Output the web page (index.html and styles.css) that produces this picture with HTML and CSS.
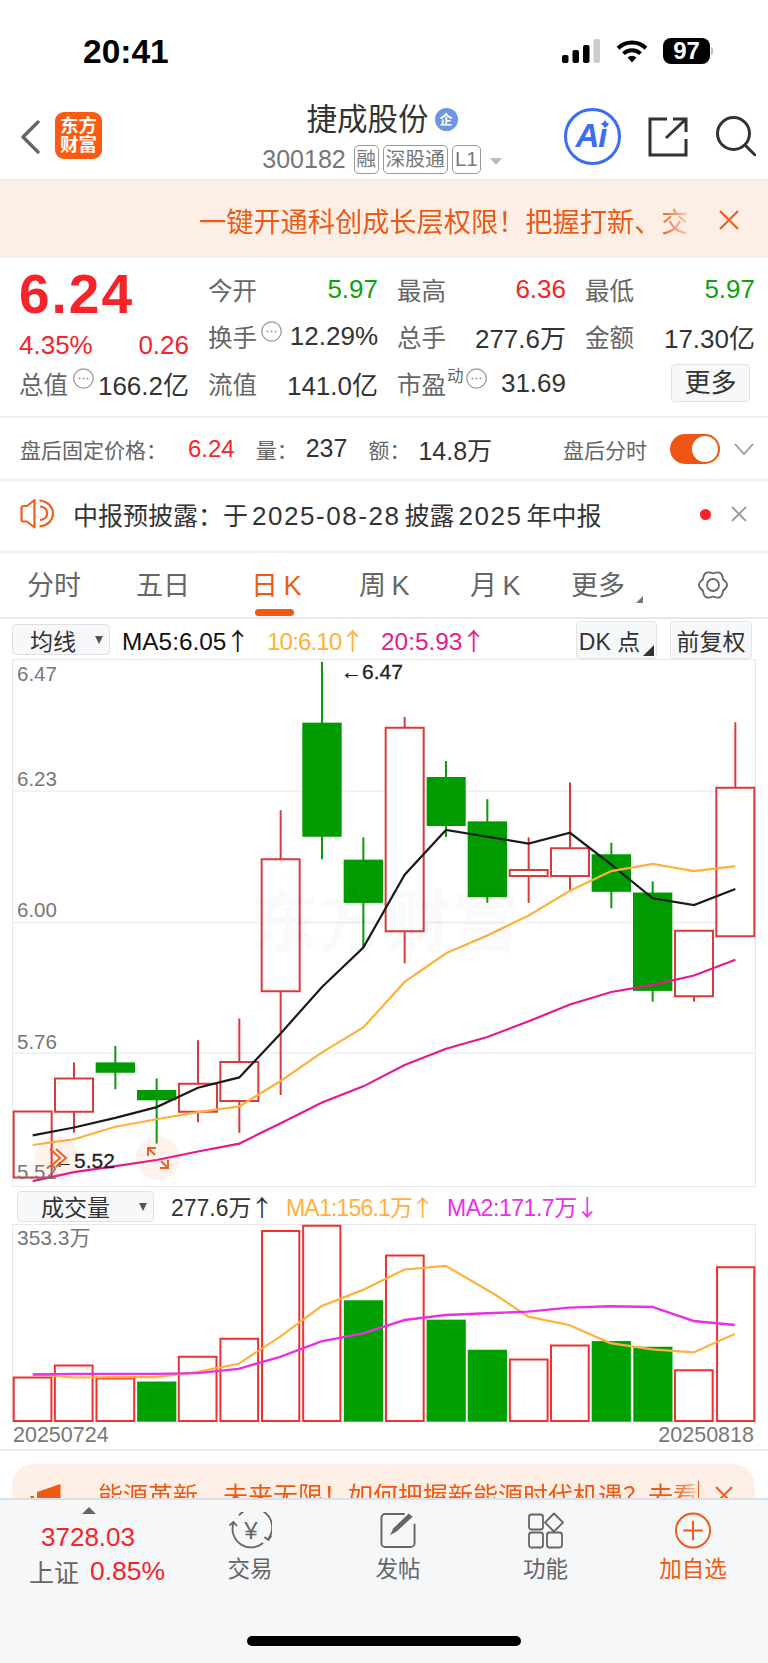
FILE: index.html
```html
<!DOCTYPE html>
<html lang="zh-CN">
<head>
<meta charset="utf-8">
<title>捷成股份 300182</title>
<link rel="stylesheet" href="styles.css">
</head>
<body>
<div class="page">
  <header class="status">
    <span class="clock">20:41</span>
    <div class="status-icons">
      <svg class="signal" viewBox="0 0 38 24" width="38" height="24">
        <rect x="0" y="16" width="6.5" height="8" rx="2" fill="#000"/>
        <rect x="10.5" y="11" width="6.5" height="13" rx="2" fill="#000"/>
        <rect x="21" y="6" width="6.5" height="18" rx="2" fill="#000"/>
        <rect x="31.5" y="0" width="6.5" height="24" rx="2" fill="#ccc"/>
      </svg>
      <svg class="wifi" viewBox="0 0 32 24" width="32" height="24">
        <path d="M2 9.2a20 20 0 0 1 28 0" fill="none" stroke="#000" stroke-width="4"/>
        <path d="M7.5 14.6a12.4 12.4 0 0 1 17 0" fill="none" stroke="#000" stroke-width="4"/>
        <path d="M11.6 18.4a6.4 6.4 0 0 1 8.8 0L16 23.6z" fill="#000"/>
      </svg>
      <div class="battery"><span>97</span></div>
    </div>
  </header>

  <nav class="nav">
    <div class="nav-left">
      <svg class="back" viewBox="0 0 20 34" width="20" height="34"><path d="M18 2 3 17l15 15" fill="none" stroke="#666" stroke-width="3.4" stroke-linecap="round" stroke-linejoin="round"/></svg>
      <div class="logo"><span>东方</span><span>财富</span></div>
    </div>
    <div class="nav-title">
      <div class="name-row"><span class="name">捷成股份</span><span class="corp">企</span></div>
      <div class="code-row">
        <span class="code">300182</span>
        <span class="tag">融</span><span class="tag">深股通</span><span class="tag">L1</span>
        <i class="code-caret"></i>
      </div>
    </div>
    <div class="nav-right">
      <div class="ai">
        <span>Ai</span>
        <svg class="spark" viewBox="0 0 10 10" width="10" height="10"><path d="M5 0c.6 3 1.6 4.2 5 5-3.4.8-4.4 2-5 5-.6-3-1.6-4.2-5-5 3.4-.8 4.4-2 5-5z" fill="#3a6cf4"/></svg>
      </div>
      <svg class="share" viewBox="0 0 40 40" width="40" height="40"><path d="M19 2H2v36h36V22M18 21 38 2M25 2h13v13" fill="none" stroke="#333" stroke-width="3"/></svg>
      <svg class="search" viewBox="0 0 40 40" width="40" height="40"><circle cx="17.500" cy="17.500" r="16" fill="none" stroke="#333" stroke-width="3"/><path d="m29 29 10 10" stroke="#333" stroke-width="3" stroke-linecap="round"/></svg>
    </div>
  </nav>

  <section class="banner">
    <div class="banner-text">一键开通科创成长层权限！把握打新、交</div>
    <svg class="close" viewBox="0 0 20 20" width="20" height="20"><path d="m1 1 18 18M19 1 1 19" stroke="#f0601f" stroke-width="2.200"/></svg>
  </section>

  <section class="stats">
    <div class="quote">
      <div class="price">6.24</div>
      <div class="change"><span>4.35%</span><span>0.26</span></div>
      <div class="cell"><span class="lab">总值<svg class="hint" viewBox="0 0 21 21" width="21" height="21"><use href="#dots"/></svg></span><span class="val">166.2亿</span></div>
    </div>
    <div class="fields">
      <div class="cell"><span class="lab">今开</span><span class="val up-no">5.97</span></div>
      <div class="cell"><span class="lab">最高</span><span class="val red">6.36</span></div>
      <div class="cell"><span class="lab">最低</span><span class="val up-no">5.97</span></div>
      <div class="cell"><span class="lab">换手<svg class="hint" viewBox="0 0 21 21" width="21" height="21"><use href="#dots"/></svg></span><span class="val">12.29%</span></div>
      <div class="cell"><span class="lab">总手</span><span class="val">277.6万</span></div>
      <div class="cell"><span class="lab">金额</span><span class="val">17.30亿</span></div>
      <div class="cell"><span class="lab">流值</span><span class="val">141.0亿</span></div>
      <div class="cell"><span class="lab">市盈<sup class="dyn">动</sup><svg class="hint" viewBox="0 0 21 21" width="21" height="21"><use href="#dots"/></svg></span><span class="val">31.69</span></div>
      <div class="cell cell-end"><button class="more">更多</button></div>
    </div>
    <svg class="defs" width="0" height="0"><defs><g id="dots"><circle cx="10.500" cy="10.500" r="9.700" fill="none" stroke="#999" stroke-width="1.300"/><circle cx="6.500" cy="10.500" r="1" fill="#999"/><circle cx="10.500" cy="10.500" r="1" fill="#999"/><circle cx="14.500" cy="10.500" r="1" fill="#999"/></g></defs></svg>
  </section>

  <section class="after">
    <span class="after-lab">盘后固定价格：</span><span class="after-price">6.24</span>
    <span class="after-lab gap-a">量：</span><span class="after-val gap-b">237</span>
    <span class="after-lab gap-c">额：</span><span class="after-val gap-b">14.8万</span>
    <span class="after-lab after-right">盘后分时</span>
    <span class="toggle"><i></i></span>
    <svg class="after-chev" viewBox="0 0 20 12" width="20" height="12"><path d="m1 1 9 10 9-10" fill="none" stroke="#999" stroke-width="1.800"/></svg>
  </section>

  <section class="notice">
    <svg class="speaker" viewBox="0 0 34 30" width="34" height="30">
      <path d="M3.500 7H7l7.500-6v27.500L7 22.500H3.500a2 2 0 0 1-2-2V9a2 2 0 0 1 2-2z" fill="none" stroke="#f0601f" stroke-width="2.200" stroke-linejoin="round"/>
      <path d="M20 7.500a7 6.500 0 0 1 0 13.500M19.500 1.500c9 1 13.500 7 13.500 13s-4.500 12-13.500 13" fill="none" stroke="#f0601f" stroke-width="2.200"/>
    </svg>
    <span class="notice-text">中报预披露：于<span class="num">2025-08-28</span>披露<span class="num">2025</span>年中报</span>
    <i class="dot"></i>
    <svg class="notice-x" viewBox="0 0 16 16" width="16" height="16"><path d="m1 1 14 14M15 1 1 15" stroke="#999" stroke-width="1.800"/></svg>
  </section>

  <section class="tabs">
    <span class="tab t1">分时</span>
    <span class="tab t2">五日</span>
    <span class="tab t3 active">日 K</span>
    <span class="tab t4">周 K</span>
    <span class="tab t5">月 K</span>
    <span class="tab t6">更多<i class="corner"></i></span>
    <svg class="gear" viewBox="0 0 32 32" width="32" height="32">
      <path d="M16 4.500Q25 .4 26 10.250Q34 16 26 21.750Q25 31.600 16 27.500Q7 31.600 6 21.750Q-2 16 6 10.250Q7 .4 16 4.500z" fill="none" stroke="#666" stroke-width="1.800"/>
      <circle cx="16" cy="16" r="6" fill="none" stroke="#666" stroke-width="1.800"/>
    </svg>
  </section>

  <section class="chart-head">
    <div class="select sel-ma"><span>均线</span><i class="drop"></i></div>
    <span class="ma ma5">MA5:6.05<span class="arr">↑</span></span>
    <span class="ma ma10">10:6.10<span class="arr">↑</span></span>
    <span class="ma ma20">20:5.93<span class="arr">↑</span></span>
    <div class="opt opt-dk">DK 点<i class="corner dark"></i></div>
    <div class="opt opt-fq">前复权</div>
  </section>

  <section class="kline">
    <svg class="plot" viewBox="36 55 2232 1475" preserveAspectRatio="none">
      <g class="grid">
        <line x1="36" x2="2268" y1="425" y2="425"/>
        <line x1="36" x2="2268" y1="792" y2="792"/>
        <line x1="36" x2="2268" y1="1157" y2="1157"/>
      </g>
      <g class="wick-red">
        <line x1="222" x2="222" y1="1183" y2="1380"/>
        <line x1="594" x2="594" y1="1121" y2="1350"/>
        <line x1="718" x2="718" y1="1060" y2="1380"/>
        <line x1="842" x2="842" y1="478" y2="1274"/>
        <line x1="1214" x2="1214" y1="217" y2="906"/>
        <line x1="1586" x2="1586" y1="554" y2="737"/>
        <line x1="1710" x2="1710" y1="400" y2="706"/>
        <line x1="2082" x2="2082" y1="998" y2="1013"/>
        <line x1="2206" x2="2206" y1="232" y2="415"/>
      </g>
      <g class="wick-green">
        <line x1="346" x2="346" y1="1137" y2="1258"/>
        <line x1="470" x2="470" y1="1228" y2="1410"/>
        <line x1="966" x2="966" y1="63" y2="615"/>
        <line x1="1090" x2="1090" y1="554" y2="862"/>
        <line x1="1338" x2="1338" y1="340" y2="553"/>
        <line x1="1462" x2="1462" y1="447" y2="737"/>
        <line x1="1834" x2="1834" y1="569" y2="752"/>
        <line x1="1958" x2="1958" y1="677" y2="1013"/>
      </g>
      <g class="body-red">
        <rect x="41" y="1320" width="114" height="185"/>
        <rect x="165" y="1228" width="114" height="93"/>
        <rect x="537" y="1243" width="114" height="78"/>
        <rect x="661" y="1182" width="114" height="109"/>
        <rect x="785" y="615" width="114" height="369"/>
        <rect x="1157" y="247" width="114" height="569"/>
        <rect x="1529" y="645" width="114" height="17"/>
        <rect x="1653" y="584" width="114" height="78"/>
        <rect x="2025" y="815" width="114" height="183"/>
        <rect x="2149" y="415" width="114" height="415"/>
      </g>
      <g class="body-green">
        <rect x="287" y="1183" width="118" height="29"/>
        <rect x="411" y="1260" width="118" height="29"/>
        <rect x="907" y="233" width="118" height="319"/>
        <rect x="1031" y="616" width="118" height="121"/>
        <rect x="1280" y="385" width="117" height="137"/>
        <rect x="1403" y="509" width="118" height="212"/>
        <rect x="1775" y="601" width="118" height="105"/>
        <rect x="1899" y="708" width="118" height="275"/>
      </g>
      <polyline class="line-black" points="98,1387 222,1365 346,1338 470,1308 594,1254 718,1225 842,1102 966,972 1090,862 1214,658 1338,533 1462,552 1586,571 1710,541 1834,630 1958,724 2082,743 2206,698"/>
      <polyline class="line-yellow" points="98,1414 222,1398 346,1363 470,1342 594,1322 718,1306 842,1235 966,1155 1090,1085 1214,958 1338,878 1462,828 1586,772 1710,703 1834,648 1958,628 2082,648 2206,634"/>
      <polyline class="line-pink" points="98,1515 222,1490 346,1473 470,1456 594,1432 718,1410 842,1353 966,1295 1090,1250 1214,1190 1338,1145 1462,1112 1586,1068 1710,1021 1834,986 1958,966 2082,940 2206,896"/>
    </svg>
    <span class="watermark">东方财富</span>
    <span class="axis a1">6.47</span>
    <span class="axis a2">6.23</span>
    <span class="axis a3">6.00</span>
    <span class="axis a4">5.76</span>
    <span class="axis a5">5.52</span>
    <span class="peak p-high">←6.47</span>
    <span class="peak p-low">←5.52</span>
    <div class="mark m1">
      <svg viewBox="0 0 44 44" width="44" height="44"><path d="m15 13 10 9-10 9M21 13l10 9-10 9" fill="none" stroke="#f0601f" stroke-width="2"/></svg>
    </div>
    <div class="mark m2">
      <svg viewBox="0 0 44 44" width="44" height="44"><path d="M12 20v-8h8M12 12l7 7M32 24v8h-8M32 32l-7-7" fill="none" stroke="#f0601f" stroke-width="2"/></svg>
    </div>
  </section>

  <section class="vol-head">
    <div class="select sel-vol"><span>成交量</span><i class="drop"></i></div>
    <span class="ma vol-now">277.6万<span class="arr">↑</span></span>
    <span class="ma vol-m1">MA1:156.1万<span class="arr">↑</span></span>
    <span class="ma vol-m2">MA2:171.7万<span class="arr">↓</span></span>
  </section>

  <section class="vol">
    <svg class="plot" viewBox="24.500 103 1519 592" preserveAspectRatio="none">
      <g class="bar-red">
        <rect x="28" y="562" width="77" height="130"/>
        <rect x="112" y="526" width="77" height="166"/>
        <rect x="197" y="565" width="77" height="127"/>
        <rect x="365" y="500" width="77" height="192"/>
        <rect x="450" y="446" width="77" height="246"/>
        <rect x="535" y="124" width="76" height="568"/>
        <rect x="619" y="108" width="76" height="584"/>
        <rect x="788" y="197" width="77" height="495"/>
        <rect x="1041" y="508" width="77" height="184"/>
        <rect x="1125" y="466" width="77" height="226"/>
        <rect x="1378" y="540" width="77" height="152"/>
        <rect x="1464" y="232" width="76" height="460"/>
      </g>
      <g class="bar-green">
        <rect x="280" y="574" width="80" height="120"/>
        <rect x="702" y="331" width="80" height="363"/>
        <rect x="871" y="389" width="80" height="305"/>
        <rect x="955" y="479" width="80" height="215"/>
        <rect x="1208" y="453" width="80" height="241"/>
        <rect x="1293" y="470" width="80" height="224"/>
      </g>
      <polyline class="line-yellow" points="67,552 150,562 235,561 318,561 403,545 487,521 572,440 656,349 741,300 826,239 910,228 1013,316 1078,380 1162,405 1246,459 1332,478 1416,487 1500,432"/>
      <polyline class="line-violet" points="67,553 150,551 235,551 318,551 403,549 487,536 572,500 656,454 741,430 826,390 910,375 995,370 1078,365 1162,353 1246,349 1332,351 1416,393 1500,405"/>
    </svg>
    <span class="axis a-vol">353.3万</span>
  </section>

  <section class="dates"><span>20250724</span><span>20250818</span></section>

  <div class="scroll-rest">
    <div class="ad">
      <svg class="ad-icon" viewBox="0 0 32 30" width="32" height="30"><path d="M1.500 12H5v18H1.500zM8 8 31.500 0v30H8z" fill="#ee5a14"/></svg>
      <div class="ad-text">能源革新，未来无限！如何把握新能源时代机遇？去看</div>
      <i class="ad-bar"></i>
      <svg class="ad-x" viewBox="0 0 18 18" width="18" height="18"><path d="m1 1 16 16M17 1 1 17" stroke="#f0601f" stroke-width="2"/></svg>
    </div>
  </div>

  <footer class="bottom">
    <div class="index">
      <i class="idx-up"></i>
      <div class="idx-num">3728.03</div>
      <div class="idx-row"><span class="idx-name">上证</span><span class="idx-pct">0.85%</span></div>
    </div>
    <div class="action">
      <svg viewBox="0 0 44 37" width="44" height="37">
        <path d="M5.500 11A18.500 18.500 0 0 0 35 31M11 3.500A18.500 18.500 0 0 1 40 27" fill="none" stroke="#666" stroke-width="1.800"/>
        <path d="M1.500 13.500 5.500 10l3.500 4M36.500 25l4 3 3-4.500" fill="none" stroke="#666" stroke-width="1.800"/>
        <text x="23" y="27" text-anchor="middle" class="yen">¥</text>
      </svg>
      <span>交易</span>
    </div>
    <div class="action">
      <svg viewBox="0 0 38 38" width="38" height="38">
        <path d="M26 2H6a4 4 0 0 0-4 4v26a4 4 0 0 0 4 4h26a4 4 0 0 0 4-4V12" fill="none" stroke="#666" stroke-width="2"/>
        <path d="m11 24 3-7L30 1.500l4 3.500-16.500 15z" fill="#666"/>
      </svg>
      <span>发帖</span>
    </div>
    <div class="action">
      <svg viewBox="0 0 36 36" width="36" height="36">
        <rect x="1" y="2" width="14" height="15" rx="2.500" fill="none" stroke="#666" stroke-width="1.800"/>
        <path d="m26 1 9 9-9 9-9-9z" fill="none" stroke="#666" stroke-width="1.800" stroke-linejoin="round"/>
        <rect x="1" y="20" width="14" height="15" rx="2.500" fill="none" stroke="#666" stroke-width="1.800"/>
        <rect x="19" y="20" width="15" height="15" rx="2.500" fill="none" stroke="#666" stroke-width="1.800"/>
      </svg>
      <span>功能</span>
    </div>
    <div class="action add">
      <svg viewBox="0 0 38 38" width="38" height="38">
        <circle cx="19" cy="19" r="17.500" fill="none" stroke="#ee5a14" stroke-width="2"/>
        <path d="M19 9v20M9 19h20" stroke="#ee5a14" stroke-width="2"/>
      </svg>
      <span>加自选</span>
    </div>
    <i class="home"></i>
  </footer>
</div>
</body>
</html>
```

FILE: styles.css
```css
* { box-sizing: border-box; }
html, body { margin: 0; padding: 0; background: #fff; }
i { display: block; font-style: normal; }

.page {
  width: 768px;
  height: 1663px;
  display: flex;
  flex-direction: column;
  overflow: hidden;
  color: #333;
  font-family: "Liberation Sans", "Noto Sans CJK SC", sans-serif;
}

/* status bar */
.status { flex: 0 0 90px; display: flex; justify-content: space-between; padding: 34px 58px 0 83px; }
.clock { font-size: 33.5px; font-weight: 700; line-height: 36px; color: #000; }
.status-icons { display: flex; align-items: flex-start; padding-top: 5px; }
.signal { margin-right: 16px; }
.wifi { margin-right: 15px; }
.battery {
  position: relative; width: 47px; height: 26px; margin-top: -1px;
  background: #000; border-radius: 8px; color: #fff;
  font-size: 24px; font-weight: 700; line-height: 26px; text-align: center;
}
.battery::after {
  content: ""; position: absolute; right: -3px; top: 9px; width: 2px; height: 8px;
  background: #bbb; border-radius: 0 2px 2px 0;
}

/* navigation */
.nav { flex: 0 0 89px; display: grid; grid-template-columns: 200px 364px 204px; }
.nav-left { display: flex; align-items: flex-start; padding: 29px 0 0 20px; }
.back { margin-top: 1px; }
.logo {
  width: 47px; height: 47px; margin: -7px 0 0 15px; padding-top: 5px;
  background: #fb5a10; border-radius: 9px; color: #fff;
  display: flex; flex-direction: column; align-items: center;
  font-size: 18.500px; font-weight: 700; line-height: 18.500px;
}
.nav-title { display: flex; flex-direction: column; align-items: center; padding-top: 11px; }
.name-row { display: flex; align-items: center; height: 36px; }
.name { font-size: 30.500px; color: #333; line-height: 36px; }
.corp {
  width: 23px; height: 23px; margin-left: 6px; border-radius: 50%;
  background: #6f94e6; color: #fff; font-size: 13px; font-weight: 700;
  line-height: 23px; text-align: center;
}
.code-row { display: flex; align-items: center; margin-top: 8px; height: 29px; }
.code { font-size: 25px; color: #777; margin-right: 8px; }
.tag {
  height: 29px; padding: 0 2px; margin-right: 4px;
  border: 1px solid #999; border-radius: 5px;
  font-size: 19.800px; line-height: 26px; color: #777;
}
.tag:nth-of-type(2) { padding: 0 1.500px; }
.tag:last-of-type { padding: 0 2px; font-size: 20.500px; }
.code-caret {
  width: 0; height: 0; margin-left: 5px; margin-top: 4px;
  border-left: 6.500px solid transparent; border-right: 6.500px solid transparent;
  border-top: 7px solid #bbb;
}
.nav-right { display: flex; align-items: flex-start; padding-top: 18px; }
.ai {
  position: relative; width: 57px; height: 57px;
  border: 3.500px solid #3a6cf4; border-radius: 50%;
  color: #3a6cf4; font-size: 33px; font-weight: 700; font-style: italic;
  line-height: 49px; text-align: center;
}
.ai span { display: block; margin-left: -3px; letter-spacing: -1px; }
.spark { position: absolute; left: 33px; top: 8px; }
.share { margin: 9px 0 0 27px; }
.search { margin: 8px 0 0 28px; }

/* promo strip */
.banner {
  flex: 0 0 79px; position: relative; display: flex; align-items: center;
  padding-left: 199px; background: #fdeee6; border-top: 2px solid #eeeeee;
}
.banner-text {
  width: 490px; white-space: nowrap;
  font-size: 27.200px; color: #ee5a14;
  -webkit-mask-image: linear-gradient(to right, #000 94%, rgba(0, 0, 0, .2) 100%);
  mask-image: linear-gradient(to right, #000 94%, rgba(0, 0, 0, .2) 100%);
}
.close { margin-left: 30px; }

/* quote panel */
.stats {
  flex: 0 0 160px; display: flex; padding: 8px 0 0 19px;
  border-bottom: 2px solid #eeeeee;
}
.stats .defs { position: absolute; }
.quote { width: 170px; margin-right: 19px; display: flex; flex-direction: column; }
.price { font-size: 55px; font-weight: 700; color: #f5242a; line-height: 54px; height: 54px; letter-spacing: 2px; padding-top: 1px; }
.change { display: flex; justify-content: space-between; height: 42px; align-items: center; margin-top: 4px; color: #f5242a; font-size: 26px; }
.quote .cell { margin-top: -6px; }
.fields { display: grid; grid-template-columns: 170px 169px 170px; grid-auto-rows: 47px; column-gap: 19px; }
.cell { display: flex; justify-content: space-between; align-items: center; height: 47px; white-space: nowrap; }
.cell-end { justify-content: flex-end; padding-right: 5px; }
.lab { display: flex; align-items: center; font-size: 24.500px; color: #666; }
.val { font-size: 26px; color: #333; }
.red { color: #f5242a; }
.up-no { color: #0aa30a; }
.hint { margin: -10px 0 0 4px; flex: none; }
.quote .hint { margin: -10px 0 0 5px; }
.dyn { font-size: 16.500px; line-height: 16px; margin: -16px 0 0 1px; vertical-align: baseline; }
.dyn + .hint { margin-left: 2px; }
.more {
  width: 79px; height: 38px; padding: 0; margin-top: -1px; background: #f7f8fa;
  border: 1px solid #dfe1e6; border-radius: 4px; font: inherit;
  font-size: 26px; line-height: 34px; color: #333;
}

/* after-hours row */
.after {
  flex: 0 0 63px; display: flex; align-items: center; padding-left: 20px;
  border-bottom: 2px solid #eeeeee; white-space: nowrap;
}
.after-lab { font-size: 21px; color: #666; }
.after-price { margin-left: 21px; font-size: 24px; color: #f5242a; }
.after-val { font-size: 25px; color: #333; }
.gap-a { margin-left: 21px; }
.gap-b { margin-left: 8px; }
.gap-c { margin-left: 21px; }
.after-right { margin-left: auto; }
.toggle { width: 50px; height: 30px; margin-left: 23px; padding: 2px 2px 2px 22px; background: #ee5514; border-radius: 15px; }
.toggle i { width: 26px; height: 26px; background: #fff; border-radius: 50%; }
.after-chev { margin: 0 14px 0 14px; }

/* announcement row */
.notice { flex: 0 0 70px; display: flex; align-items: center; padding: 0 0 4px 20px; white-space: nowrap; }
.notice-text { margin-left: 19px; font-size: 25px; color: #333; }
.num { margin: 0 4px; font-size: 26px; letter-spacing: 1.550px; }
.dot { width: 11px; height: 11px; margin-left: auto; background: #f5242a; border-radius: 50%; }
.notice-x { margin: 0 21px 0 20px; }

/* period tabs */
.tabs {
  flex: 0 0 68px; position: relative; display: flex; align-items: center;
  border-top: 2px solid #eeeeee; border-bottom: 2px solid #e6e7ec; white-space: nowrap;
}
.tab { position: absolute; top: 15px; font-size: 27px; line-height: 36px; color: #666; word-spacing: -2px; }
.t1 { left: 27px; }
.t2 { left: 136px; }
.t3 { left: 251px; color: #ee5a14; }
.t4 { left: 359px; }
.t5 { left: 470px; }
.t6 { left: 571px; }
.active::after {
  content: ""; position: absolute; left: 4px; top: 41px; width: 39px; height: 6.500px;
  background: #ee5a14; border-radius: 3.500px;
}
.corner {
  position: absolute; right: -18px; bottom: 1px; width: 0; height: 0;
  border-style: solid; border-width: 0 0 7px 7px;
  border-color: transparent transparent #777 transparent;
}
.gear { position: absolute; left: 697px; top: 16px; }

/* chart legends */
.chart-head { flex: 0 0 40px; position: relative; white-space: nowrap; }
.select {
  position: absolute; display: flex; align-items: center;
  background: #f7f8fa; border: 1px solid #dfe1e6; border-radius: 4px; color: #333;
}
.sel-ma { left: 12px; top: 5px; width: 98px; height: 31px; padding-left: 17px; font-size: 23px; }
.drop {
  position: absolute; right: 6px; top: 11px; width: 0; height: 0;
  border-left: 4.500px solid transparent; border-right: 4.500px solid transparent;
  border-top: 8px solid #555;
}
.ma { position: absolute; top: 3px; font-size: 24.400px; line-height: 36px; }
.arr { margin-left: 2px; font-family: "Noto Sans CJK SC", sans-serif; display: inline-block; width: 18px; text-align: center; text-indent: -3px; letter-spacing: 0; }
.ma5 { left: 122px; color: #111; }
.ma10 { left: 267px; color: #ffb13b; letter-spacing: -1px; }
.ma20 { left: 381px; color: #e6198f; }
.opt {
  position: absolute; top: 2px; height: 38px; display: flex; align-items: center; justify-content: center;
  background: #f7f8fa; border: 1px solid #e3e5ea; border-radius: 4px; font-size: 23px; color: #333;
}
.opt-dk { left: 576px; width: 81px; padding-right: 14px; }
.opt-fq { left: 670px; width: 82px; }
.corner.dark { right: 2px; bottom: 2px; border-width: 0 0 11px 11px; border-color: transparent transparent #333 transparent; }

/* candlestick pane */
.kline, .vol { position: relative; margin-left: 12px; width: 744px; border: 1px solid #e6e7ec; }
.kline { flex: 0 0 527.500px; }
.vol { flex: 0 0 198px; }
.plot { position: absolute; left: -1px; top: -1px; width: 744px; height: calc(100% + 2px); overflow: visible; }
.plot line, .plot rect, .plot polyline { vector-effect: non-scaling-stroke; }
.grid line { stroke: #edeff3; stroke-width: 1.500; }
.wick-red line { stroke: #d93a3a; stroke-width: 2; }
.wick-green line { stroke: #0a9a0a; stroke-width: 2; }
.body-red rect { fill: #fff; stroke: #d93a3a; stroke-width: 2; }
.body-green rect { fill: #009b00; }
.line-black, .line-yellow, .line-pink, .line-violet { fill: none; stroke-width: 2.200; }
.line-black { stroke: #1a1a1a; }
.line-yellow { stroke: #ffb13b; }
.line-pink { stroke: #e6198f; }
.line-violet { stroke: #e830e8; stroke-width: 2.400; }
.watermark {
  position: absolute; left: 238px; top: 229px; font-size: 67px; line-height: 67px; font-weight: 700;
  color: rgba(0, 0, 0, .018); white-space: nowrap;
}
.axis { position: absolute; left: 4px; font-size: 20.500px; line-height: 24px; color: #777; }
.a1 { top: 2px; }
.a2 { top: 107px; }
.a3 { top: 238px; }
.a4 { top: 370px; }
.a5 { top: 500px; }
.a-vol { top: 1px; font-size: 21px; }
.peak { position: absolute; font-size: 21px; line-height: 24px; color: #222; white-space: nowrap; -webkit-text-stroke: .3px #222; }
.p-high { left: 328px; top: 0; }
.p-low { left: 40px; top: 489px; }
.mark { position: absolute; top: 476px; width: 44px; height: 44px; border-radius: 50%; background: rgba(240, 90, 20, .08); }
.m1 { left: 22px; }
.m2 { left: 123px; }
.mark svg { display: block; }

/* volume pane */
.vol-head { flex: 0 0 37.500px; position: relative; white-space: nowrap; }
.sel-vol { left: 17px; top: 4px; width: 137px; height: 31px; padding-left: 23px; font-size: 23px; }
.vol-head .ma { top: 1px; font-size: 23px; }
.vol-now { left: 171px; color: #333; }
.vol-m1 { left: 286px; color: #ffb13b; letter-spacing: -.8px; }
.vol-m2 { left: 447px; color: #e830e8; letter-spacing: -.45px; }
.bar-red rect { fill: #fff; stroke: #f03030; stroke-width: 2; }
.bar-green rect { fill: #00a000; }

.dates {
  flex: 0 0 28.500px; display: flex; justify-content: space-between; align-items: center;
  padding: 0 14px 0 13px; border-bottom: 2px solid #e6e7ec;
  font-size: 21.500px; color: #777;
}

/* promo card sitting behind the toolbar */
.scroll-rest { flex: 1 1 0; min-height: 0; overflow: hidden; padding: 13px 13px 0 12px; }
.ad {
  position: relative; height: 70px; display: flex; align-items: flex-start;
  background: #fdeee6; border-radius: 22px;
}
.ad-icon { position: absolute; left: 17px; top: 20px; }
.ad-text {
  position: absolute; left: 86px; top: 15px; width: 600px; white-space: nowrap;
  font-size: 25px; line-height: 34px; color: #ee5a14;
  -webkit-mask-image: linear-gradient(to right, #000 96%, rgba(0, 0, 0, .25) 100%);
  mask-image: linear-gradient(to right, #000 96%, rgba(0, 0, 0, .25) 100%);
}
.ad-bar { position: absolute; left: 686px; top: 17px; width: 1px; height: 26px; background: #ee5a14; }
.ad-x { position: absolute; left: 703px; top: 22px; }

/* bottom toolbar */
.bottom {
  flex: 0 0 165px; position: relative; display: grid;
  grid-template-columns: 176px 148px 148px 147px 148px; align-items: start;
  background: #f6f7f9; border-top: 2px solid #dfe0e5;
}
.index { display: flex; flex-direction: column; align-items: center; }
.idx-up {
  margin: 7px 0 0 2px; width: 0; height: 0;
  border-left: 7px solid transparent; border-right: 7px solid transparent;
  border-bottom: 7px solid #666;
}
.idx-num { margin-top: 7px; font-size: 26px; line-height: 32px; color: #f5242a; }
.idx-row { display: flex; align-items: center; margin: 0 0 0 18px; height: 36px; white-space: nowrap; }
.idx-name { font-size: 25px; color: #666; }
.idx-pct { margin-left: 11px; font-size: 26.500px; color: #f5242a; }
.action { display: flex; flex-direction: column; align-items: center; font-size: 22.500px; color: #666; padding-top: 12px; }
.action svg { height: 37px; }
.action span { margin-top: 5px; line-height: 32px; }
.add { color: #ee5a14; }
.yen { font-size: 24px; fill: #666; }
.home { position: absolute; left: 247px; top: 136px; width: 274px; height: 10px; background: #000; border-radius: 5px; }
```
